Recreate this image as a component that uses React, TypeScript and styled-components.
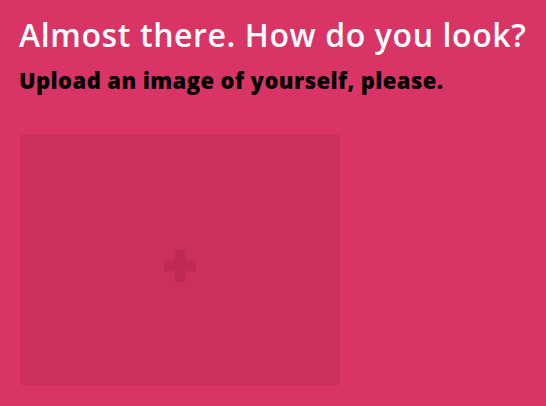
import React from "react";
import styled, { createGlobalStyle } from "styled-components";

const GlobalStyle = createGlobalStyle`
  html, body {
    margin: 0;
    padding: 0;
    background: #d93466;
  }
  body {
    font-family: "Open Sans", Lato, sans-serif;
  }
`;

const Page = styled.div`
  display: flex;
  flex-direction: column;
  padding: 12px 0 0 19px;
  box-sizing: border-box;
  width: 546px;
  height: 406px;
  overflow: hidden;
`;

const Title = styled.h1`
  margin: 0;
  font-size: 32px;
  font-weight: 600;
  line-height: 46px;
  color: #ffffff;
  letter-spacing: 0.6px;
  white-space: nowrap;
`;

const Subtitle = styled.h2`
  margin: 7px 0 0 0;
  font-size: 22px;
  font-weight: 800;
  line-height: 30px;
  letter-spacing: 0.4px;
  color: #000000;
  white-space: nowrap;
`;

const Dropzone = styled.button`
  flex-shrink: 0;
  margin-top: 39px;
  margin-left: 1px;
  width: 320px;
  height: 252px;
  border: none;
  border-radius: 5px;
  background: #cb2f5d;
  display: flex;
  align-items: center;
  justify-content: center;
  padding: 12px 0 0 0;
  cursor: pointer;
`;

const Plus = styled.svg`
  width: 32px;
  height: 32px;
  display: block;
`;

export default function App() {
  return (
    <>
      <GlobalStyle />
      <Page>
        <Title>Almost there. How do you look?</Title>
        <Subtitle>Upload an image of yourself, please.</Subtitle>
        <Dropzone aria-label="Upload image">
          <Plus viewBox="0 0 32 32">
            <rect x="11" y="0" width="10.5" height="32" fill="#bf2a55" />
            <rect x="0" y="10.7" width="32" height="10.5" fill="#bf2a55" />
          </Plus>
        </Dropzone>
      </Page>
    </>
  );
}
